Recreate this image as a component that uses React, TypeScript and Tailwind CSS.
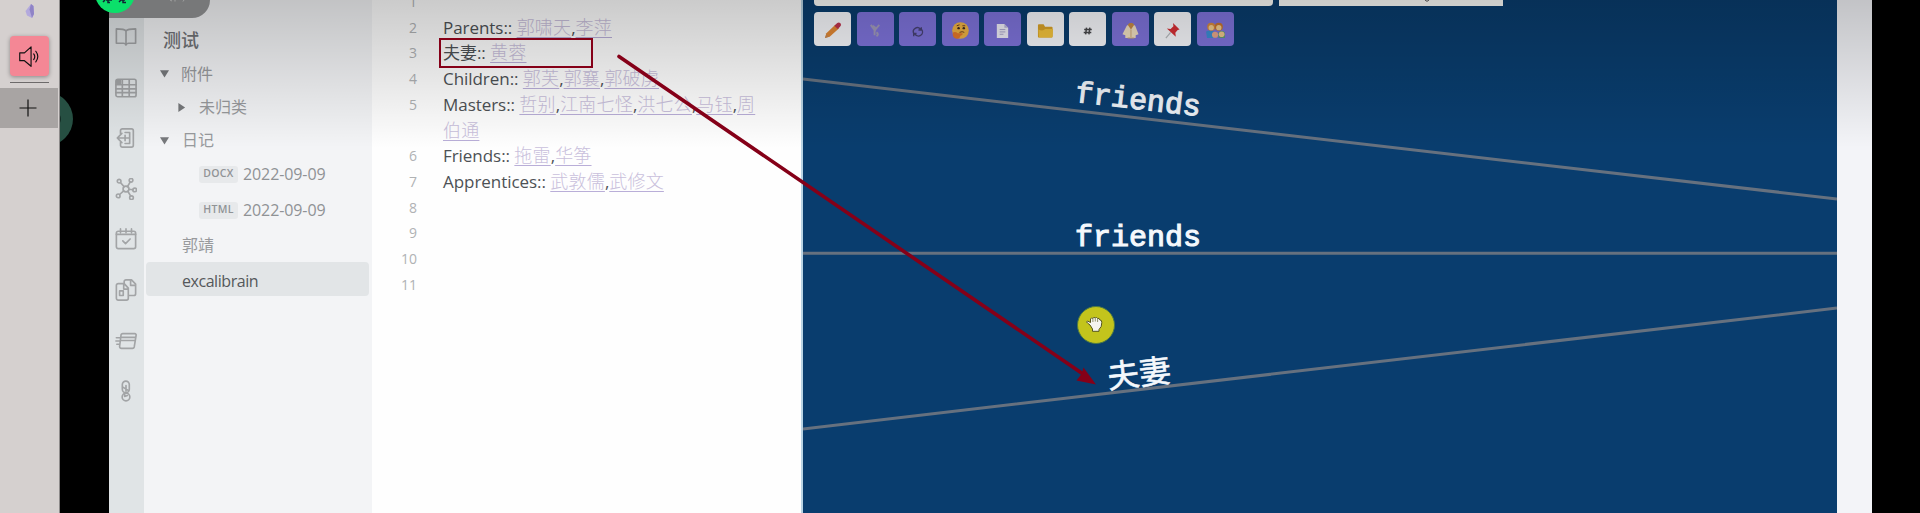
import React from "react";

const ribbon: React.ReactNode[] = [
  <path key="a" d="M12 5.500C10.500 3.600 8 3.200 1.500 3.200v15.600h7.600c1.500 0 2.500.6 2.900 2 .4-1.400 1.400-2 2.900-2h7.600V3.200C16 3.200 13.500 3.600 12 5.500zM12 5.500v15" />,
  <g key="b"><rect x="1" y="2.500" width="22" height="19" rx="2" /><path d="M1 8.500h22M1 13h22M1 17h22M8 3v18M15.500 3v18" /><path d="M2 3h4v4H2z" fill="currentColor" /></g>,
  <g key="c"><path d="M6 7V4a2 2 0 0 1 2-2h10a2 2 0 0 1 2 2v16a2 2 0 0 1-2 2H8a2 2 0 0 1-2-2v-3" /><path d="M16 12H2.500m5-5-5 5 5 5M11 6h5v12h-5M11 9v6" /></g>,
  <g key="d"><circle cx="12" cy="12" r="3.200" /><circle cx="4.500" cy="3.500" r="2" /><circle cx="17.500" cy="2.500" r="2" /><circle cx="21.500" cy="13" r="2" /><circle cx="18" cy="21.500" r="2" /><circle cx="3.500" cy="19.500" r="2" /><path d="M6 5l4 4.500M16.500 4.500l-3 5M15.200 12.300l4.300.5M14 14.500l3 5M9.500 14l-4.500 4" /></g>,
  <g key="e"><rect x="1.500" y="3.500" width="21" height="19" rx="2" /><path d="M1.500 7h21M6 1v4M12 1v4M18 1v4M8.500 14l3 3 5-5" /></g>,
  <g key="f"><path d="M10 6V3a2 2 0 0 1 2-2h6l4.500 4.500V16a2 2 0 0 1-2 2H15M17 1v6h5" /><path d="M3.500 5H10l4.500 5v11a2 2 0 0 1-2 2h-9a2 2 0 0 1-2-2V7a2 2 0 0 1 2-2zM9.500 5v6h5M5 13h4v5H5z" /></g>,
  <g key="g"><path d="M8.500 4h13A1.500 1.500 0 0 1 23 6l-2 12.500a2 2 0 0 1-2 1.500H7a2 2 0 0 1-2-2l1.500-12A2 2 0 0 1 8.500 4zM6.500 8H22M6.500 11.500h15M1.500 8.500h4M1 12h4M2 15.500h3" /></g>,
  <g key="h"><path d="M8 5a3.800 3.800 0 0 1 7.600 0v5a3.800 3.800 0 0 1-7.600 0zM12 6v6M9 8l5 3" /><circle cx="12" cy="18.500" r="4.200" /><path d="M10.500 14v4l3-1" /></g>,
];

function Dock() {
  return (
    <div className="flex w-[60px] shrink-0 flex-col border-r border-[#8d8a8a] bg-[#d5d0cf]">
      <div className="flex h-[36px] justify-center">
        <svg viewBox="0 0 10 14" className="mt-[4px] h-[14px] w-[10px]">
          <path d="M6 0l2.500 2 .5 8-2 4-5-2.500L.5 7z" fill="#b3a9dd" />
          <path d="M6 0L4.500 5.500l2.500 8.500 2-4-.5-8z" fill="#8f83c6" />
        </svg>
      </div>
      <div className="ml-[10px] flex h-[40px] w-[39px] items-center justify-center rounded-[4px] bg-[#f48795] shadow-[0_1px_4px_rgba(0,0,0,0.35)]">
        <svg viewBox="0 0 20 20" className="size-[21px]" fill="none" stroke="#111" strokeWidth="1.100" strokeLinejoin="round" strokeLinecap="round">
          <path d="M.7 6.500V14h4.500l6.300 5.300V.8L5.200 6.500zM14 7.500q2 2.700 0 5.500M16 5q3.800 5 0 10.200" />
        </svg>
      </div>
      <div className="ml-[10px] mt-[6px] h-px w-[39px] bg-[#6d6a6a]" />
      <div className="mt-[5px] flex h-[40px] w-[58px] items-center justify-center bg-[#a8a4a3]">
        <svg viewBox="0 0 18 18" className="-ml-[2px] size-[18px]" stroke="#111" strokeWidth="1.200"><path d="M9 .5v17M.5 9h17" /></svg>
      </div>
    </div>
  );
}

function Gap() {
  return (
    <div className="relative w-[49px] shrink-0 overflow-hidden bg-black">
      <div className="absolute -left-[41px] top-[92px] flex size-[54px] items-center justify-end rounded-full bg-[#264f42] pr-[12px]">
        <div className="size-[14px] rounded-full border-[3px] border-[#132b24]" />
      </div>
    </div>
  );
}

function Ribbon() {
  return (
    <nav className="flex w-[35px] shrink-0 flex-col items-center gap-[28.600px] bg-[#e0e4e6] pr-[2px] pt-[26px] text-[#a2a4a6]">
      {ribbon.map((d, i) => (
        <svg key={i} viewBox="0 0 24 24" className="size-[22px] shrink-0" fill="none" stroke="currentColor" strokeWidth="1.800" strokeLinejoin="round" strokeLinecap="round">{d}</svg>
      ))}
    </nav>
  );
}

function Caret({ open }: { open?: boolean }) {
  return (
    <svg viewBox="0 0 10 10" className="size-[9px] shrink-0 text-[#77797c]">
      <path d={open ? "M0 1.500h10L5 9.500z" : "M1.500 0v10L9 5z"} fill="currentColor" />
    </svg>
  );
}

function FileRow({ tag }: { tag: string }) {
  return (
    <div className="flex h-[36px] items-center pl-[55px]">
      <span className="flex h-[17px] w-[39px] items-center justify-center rounded-[3px] bg-[#e7e9eb] text-[10.500px] font-semibold tracking-[0.300px] text-[#909396]">{tag}</span>
      <span className="ml-[5px] text-[16px] tracking-[-0.100px] text-[#8f9295]">2022-09-09</span>
    </div>
  );
}

function Files() {
  return (
    <aside className="flex w-[228px] shrink-0 flex-col bg-[#f3f4f6] pt-[24px] text-[16px] text-[#989a9d]">
      <div className="flex h-[33px] items-center pl-[19px] text-[18px] font-medium text-[#717376]">测试</div>
      <div className="flex h-[33px] items-center gap-[12px] pl-[16px]"><Caret open />附件</div>
      <div className="flex h-[34px] items-center gap-[13px] pl-[33px]"><Caret />未归类</div>
      <div className="flex h-[32px] items-center gap-[13px] pl-[16px]"><Caret open />日记</div>
      <FileRow tag="DOCX" />
      <FileRow tag="HTML" />
      <div className="flex h-[34px] items-center pl-[38px]">郭靖</div>
      <div className="ml-[2px] flex h-[34px] w-[223px] items-center rounded-[4px] bg-[#e2e5e7] pl-[36px] pt-[3px] tracking-[-0.450px] text-[#55585b]">excalibrain</div>
    </aside>
  );
}

const lines: { n: number; label?: string; links?: string[] }[] = [
  { n: 1 },
  { n: 2, label: "Parents::", links: ["郭啸天", "李萍"] },
  { n: 3, label: "夫妻::", links: ["黄蓉"] },
  { n: 4, label: "Children::", links: ["郭芙", "郭襄", "郭破虏"] },
  { n: 5, label: "Masters::", links: ["哲别", "江南七怪", "洪七公", "马钰", "周伯通"] },
  { n: 6, label: "Friends::", links: ["拖雷", "华筝"] },
  { n: 7, label: "Apprentices::", links: ["武敦儒", "武修文"] },
  { n: 8 }, { n: 9 }, { n: 10 }, { n: 11 },
];

function Editor() {
  return (
    <main className="relative w-[431px] shrink-0 border-r-2 border-[#b9d4e4] bg-[#fefefe]">
      <div className="-mt-[11px]">
        {lines.map((l) => (
          <div key={l.n} className="flex text-[17px] leading-[25.700px]">
            <span className="w-[45px] shrink-0 text-right text-[14px] text-[#b0b2b4]">{l.n}</span>
            <p className="ml-[26px] min-h-[25.700px] w-[325px] tracking-[-0.050px] text-[#4d5155]">
              {l.label}{" "}
              {l.links?.map((t, i) => (
                <React.Fragment key={t}>
                  {i > 0 && ","}
                  <span className="text-[18px] font-light tracking-[0.200px] text-[#c9c0dc] underline decoration-[#b9aed8] decoration-1 underline-offset-[3px]">{t}</span>
                </React.Fragment>
              ))}
            </p>
          </div>
        ))}
      </div>
    </main>
  );
}

const tools: { name: string; on?: boolean; icon: React.ReactNode }[] = [
  { name: "edit", icon: <g><path d="M1 17l1.500-5L12 3l4 3.500L6 15.500z" fill="#e58a35" /><path d="M11 4l3-3q2-1 3.500.5T17 5l-2.500 2.500z" fill="#c2344f" /><path d="M1 17l1.500-4 2.500 2.500z" fill="#c98a55" /></g> },
  { name: "filter", on: true, icon: <path d="M4 3l5 7M13 3l-5 6v5M10 11q3 2 0 4M6 4l4 3" stroke="#a39dbd" strokeWidth="2" fill="none" /> },
  { name: "sync", on: true, icon: <path d="M5 12a4.200 4.200 0 0 1 7-4.500l1 1M13.500 8a4.200 4.200 0 0 1-7 5l-1.500-1M13 5.500v3h-3M5 15v-3h3" stroke="#484375" strokeWidth="1.500" fill="none" /> },
  { name: "infer", on: true, icon: <g><circle cx="9" cy="9" r="8.800" fill="#f2b544" /><path d="M1 11q3-1 5 1l5 0q1 2-2 2.500-1 4-5 3Q0 16 1 11z" fill="#e87a2c" /><circle cx="7" cy="6.500" r="1.300" fill="#3c2a20" /><circle cx="12.500" cy="6.500" r="1.300" fill="#3c2a20" /><path d="M5 4l3-1M11 4l3 0M8 11q3-1.500 5 0" stroke="#6b3c1c" fill="none" /></g> },
  { name: "page", on: true, icon: <g><path d="M3 2h8l4 4v11H3z" fill="#f2f1fb" /><path d="M11 2v4h4z" fill="#bbb7dd" /><path d="M6 8h6M6 10.500h6M6 13h4" stroke="#a9a5cc" /></g> },
  { name: "folder", icon: <g><path d="M1 3.500q0-1 1-1h5l1.500 2.500h7q1 0 1 1V15q0 1.500-1 1.500H2q-1 0-1-1z" fill="#dca428" /><path d="M1.500 8q5 2 7-.5H17l-.5 7.500q0 1.500-1 1.500H3q-1 0-1-1z" fill="#f7c63c" /></g> },
  { name: "tag", icon: <path d="M8 6L7 13M11.500 6L10.500 13M5.500 8h8M5 11h8" stroke="#4a4a4d" strokeWidth="1.600" /> },
  { name: "alias", on: true, icon: <g><path d="M5 4l3-2h3l3 2 3.500 9-3 1v3h-11v-3L.5 13z" fill="#f4e3c4" /><path d="M6 3l3.500 5L13 3l-2-2H8z" fill="#c98b45" /><path d="M9.500 8v8M6 17h7" stroke="#cfa873" /></g> },
  { name: "pin", icon: <g><path d="M9.500 1l7 7-2 .5-2.500 3 .5 4L3 7l4 .5 3-3z" fill="#d92f35" /><path d="M7 11l-5 6" stroke="#b9bcc0" strokeWidth="1.300" /></g> },
  { name: "family", on: true, icon: <g><path d="M-1 10q5-2 8 0v7H0z" fill="#3b8fd6" /><path d="M12 11q4-3 7 0v6h-7z" fill="#5f9d7a" /><circle cx="4.500" cy="5" r="4.300" fill="#d98b3c" /><circle cx="12.500" cy="5" r="4.300" fill="#c9762e" /><circle cx="4.500" cy="6" r="2.800" fill="#f4cf8e" /><circle cx="12.500" cy="6" r="2.800" fill="#f4cf8e" /><circle cx="8.500" cy="13.500" r="3.300" fill="#e9a98a" /><circle cx="15.500" cy="13" r="3" fill="#f1c98c" /></g> },
];

function Graph() {
  return (
    <section className="relative w-[1034px] shrink-0 overflow-hidden bg-[#093d6e]">
      <div className="flex gap-[6px] pl-[11px]">
        <div className="h-[6px] w-[459px] rounded-b-[4px] bg-[#fffffb]" />
        <div className="flex h-[6px] w-[224px] justify-center bg-[#fffffb]">
          <svg viewBox="0 0 6 3" className="ml-[72px] h-[2px] w-[6px]"><path d="M0 0q3 4 6 0" stroke="#555" fill="none" strokeWidth="1.500" /></svg>
        </div>
      </div>
      <div className="mt-[6px] flex gap-[5.500px] pl-[11px]">
        {tools.map((t) => (
          <button key={t.name} className={t.on ? "flex h-[34px] w-[37px] items-center justify-center rounded-[4px] bg-[#7f74dd]" : "flex h-[34px] w-[37px] items-center justify-center rounded-[4px] bg-[#fafbff]"}>
            <svg viewBox="0 0 18 18" className="mt-[2px] size-[17px] overflow-visible">{t.icon}</svg>
          </button>
        ))}
      </div>
      <svg viewBox="0 0 1034 513" className="absolute inset-0 h-[513px] w-[1034px]" stroke="#66717f" strokeWidth="3">
        <path d="M0 79L1034 199M0 253.300H1034M0 429L1034 308" />
      </svg>
      <span className="absolute left-[272px] top-[83px] rotate-[6.600deg] font-['Liberation_Mono',monospace] text-[30px] leading-[36px] text-[#eef3f8] [-webkit-text-stroke:1.100px_#eef3f8]">friends</span>
      <span className="absolute left-[272px] top-[220px] font-['Liberation_Mono',monospace] text-[30px] leading-[36px] text-[#f4f8fc] [-webkit-text-stroke:1.100px_#f4f8fc]">friends</span>
      <span className="absolute left-[304px] top-[352px] rotate-[-6.600deg] font-['Noto_Sans_CJK_SC',sans-serif] text-[32px] leading-[38px] text-[#f4f8fc] [-webkit-text-stroke:0.600px_#f4f8fc]">夫妻</span>
      <div className="absolute left-[274px] top-[306px] flex size-[38px] items-center justify-center rounded-full border border-[#4d7a45] bg-[#c3c41c]">
        <svg viewBox="0 0 18 18" className="-ml-[4px] -mt-[3px] size-[18px]">
          <path d="M5 10L2.500 8q-2-1 0-2l3 1.500V4q1-2 2.300-.5Q9 1.500 10.200 3q1.500-1.200 2.300.4 2-.6 2.300 1.500Q17 5 16.800 7.500 17 12 14 14.500v1.800H7.500V14z" fill="#f5f5f0" stroke="#55561c" />
          <path d="M7.900 4v3M10.300 3.500v3M12.600 4v3" stroke="#77784a" strokeWidth=".8" />
        </svg>
      </div>
    </section>
  );
}

export default function App() {
  return (
    <div className="relative flex h-[513px] w-[1920px] overflow-hidden bg-black font-['Open_Sans','Noto_Sans_CJK_SC',sans-serif]">
      <Dock />
      <Gap />
      <div className="relative flex w-[1763px] shrink-0">
        <Ribbon />
        <Files />
        <Editor />
        <Graph />
        <div className="w-[35px] shrink-0 bg-[#f3f4f8]" />
        <div className="pointer-events-none absolute inset-x-0 top-0 h-[148px] bg-gradient-to-b from-black/20 via-black/10 to-transparent" />
        <div className="absolute left-0 top-0 h-[18px] w-[101px] overflow-hidden rounded-br-[25px] bg-[#777879]">
          <svg viewBox="0 0 20 3" className="ml-[60px] h-[3px] w-[20px]"><path d="M1 0l2 1M6 0v1.500M15 0l-1 1.500" stroke="#a0a0a0" /></svg>
        </div>
      </div>
      <svg viewBox="0 0 40 14" className="absolute left-[95px] top-0 h-[14px] w-[40px]">
        <circle cx="20" cy="-7" r="20" fill="#0be06a" />
        <path d="M10 0L8 2M13 0v2.500h2M26 0l-2 2M28 0v2.500h3M11 0h6M26 0h4" stroke="#123" strokeWidth="1.500" fill="none" />
      </svg>
      <svg viewBox="0 0 1920 513" className="pointer-events-none absolute inset-0 h-[513px] w-[1920px]" fill="none" stroke="#850018">
        <rect x="440" y="39" width="152" height="28" strokeWidth="2" />
        <path d="M619 56.500L1083 374" strokeWidth="3.600" strokeLinecap="round" />
        <path d="M1096 384.500L1076.500 380.500 1081.500 374 1083.500 367.500z" fill="#850018" stroke="none" />
      </svg>
    </div>
  );
}
